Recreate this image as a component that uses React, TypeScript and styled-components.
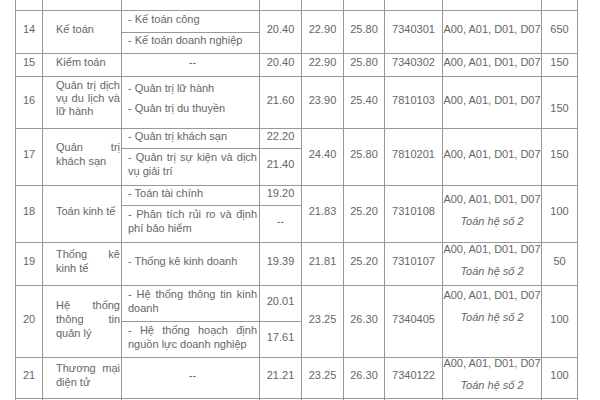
import React from 'react';
import styled, { createGlobalStyle } from 'styled-components';

const Global = createGlobalStyle`
  html, body { margin: 0; padding: 0; background: #fff; }
  body { font-family: "Liberation Sans", Arial, sans-serif; }
`;

const Page = styled.div`
  width: 600px;
  height: 400px;
  overflow: hidden;
  padding-left: 15px;
  box-sizing: border-box;
  background: #fff;
`;

const Table = styled.table`
  border-collapse: collapse;
  table-layout: fixed;
  width: 563px;
  font-size: 11px;
  color: #666;
  border-left: 1px solid #666;
  border-right: 1px solid #666;
`;

const Tr = styled.tr<{ $h: number }>`
  height: ${(p) => p.$h}px;
`;

const Td = styled.td<{ $noTop?: boolean; $pt?: number }>`
  border: 1px solid #999;
  border-top: ${(p) => (p.$noTop ? 'none' : '1px solid #999')};
  padding: ${(p) => p.$pt ?? 0}px 0 5px 0;
  vertical-align: middle;
  text-align: center;
  line-height: 14px;
  white-space: normal;
`;

const Blank = styled(Td)`
  padding: 0;
`;

const Name = styled(Td)<{ $tight?: boolean }>`
  text-align: justify;
  line-height: ${(p) => (p.$tight ? 13 : 14)}px;
  padding: 0 1px ${(p) => (p.$tight ? 8 : 5)}px 13px;
`;

const Sub = styled(Td)<{ $center?: boolean }>`
  text-align: ${(p) => (p.$center ? 'center' : 'justify')};
  padding: 0 2px 5px 6px;
`;

const SubLines = styled.div`
  line-height: 20px;
  margin-top: -3px;
`;

const Combo = styled(Td)`
  text-align: center;
  white-space: nowrap;
`;

const ComboStack = styled(Combo)`
  padding: 0;
`;

const ComboLines = styled.div<{ $extra?: boolean }>`
  line-height: 22px;
  margin-top: -8px;
  margin-bottom: ${(p) => (p.$extra ? 22 : 0)}px;
`;

const Note = styled.div`
  font-style: italic;
`;

const widths = [27, 79, 138, 42, 42, 41, 58, 99, 36];

const COMBO = 'A00, A01, D01, D07';

const Combo2: React.FC<{ extra?: boolean; rowSpan?: number }> = ({ extra, rowSpan }) => (
  <ComboStack rowSpan={rowSpan}>
    <ComboLines $extra={extra}>
      <div>{COMBO}</div>
      <Note>Toán hệ số 2</Note>
    </ComboLines>
  </ComboStack>
);

const Empty: React.FC<{ h: number; noTop?: boolean }> = ({ h, noTop }) => (
  <Tr $h={h}>
    {widths.map((_, i) => (
      <Blank key={i} $noTop={noTop} />
    ))}
  </Tr>
);

export default function App() {
  return (
    <>
      <Global />
      <Page>
        <Table>
          <colgroup>
            {widths.map((w, i) => (
              <col key={i} style={{ width: w }} />
            ))}
          </colgroup>
          <tbody>
            <Empty h={10} noTop />

            <Tr $h={22}>
              <Td rowSpan={2}>14</Td>
              <Name rowSpan={2}>Kế toán</Name>
              <Sub>- Kế toán công</Sub>
              <Td rowSpan={2}>20.40</Td>
              <Td rowSpan={2}>22.90</Td>
              <Td rowSpan={2}>25.80</Td>
              <Td rowSpan={2}>7340301</Td>
              <Combo rowSpan={2}>{COMBO}</Combo>
              <Td rowSpan={2}>650</Td>
            </Tr>
            <Tr $h={21}>
              <Sub>- Kế toán doanh nghiệp</Sub>
            </Tr>

            <Tr $h={23}>
              <Td>15</Td>
              <Name>Kiểm toán</Name>
              <Sub $center>--</Sub>
              <Td>20.40</Td>
              <Td>22.90</Td>
              <Td>25.80</Td>
              <Td>7340302</Td>
              <Combo>{COMBO}</Combo>
              <Td>150</Td>
            </Tr>

            <Tr $h={52}>
              <Td>16</Td>
              <Name $tight>Quản trị dịch vụ du lịch và lữ hành</Name>
              <Sub>
                <SubLines>
                  <div>- Quản trị lữ hành</div>
                  <div>- Quản trị du thuyền</div>
                </SubLines>
              </Sub>
              <Td>21.60</Td>
              <Td>23.90</Td>
              <Td>25.40</Td>
              <Td>7810103</Td>
              <Combo>{COMBO}</Combo>
              <Td $pt={17}>150</Td>
            </Tr>

            <Tr $h={20}>
              <Td rowSpan={2}>17</Td>
              <Name rowSpan={2}>Quản trị khách sạn</Name>
              <Sub>- Quản trị khách sạn</Sub>
              <Td>22.20</Td>
              <Td rowSpan={2}>24.40</Td>
              <Td rowSpan={2}>25.80</Td>
              <Td rowSpan={2}>7810201</Td>
              <Combo rowSpan={2}>{COMBO}</Combo>
              <Td rowSpan={2}>150</Td>
            </Tr>
            <Tr $h={37}>
              <Sub>- Quản trị sự kiện và dịch vụ giải trí</Sub>
              <Td>21.40</Td>
            </Tr>

            <Tr $h={20}>
              <Td rowSpan={2}>18</Td>
              <Name rowSpan={2}>Toán kinh tế</Name>
              <Sub>- Toán tài chính</Sub>
              <Td>19.20</Td>
              <Td rowSpan={2}>21.83</Td>
              <Td rowSpan={2}>25.20</Td>
              <Td rowSpan={2}>7310108</Td>
              <Combo2 rowSpan={2} />
              <Td rowSpan={2}>100</Td>
            </Tr>
            <Tr $h={37}>
              <Sub>- Phân tích rủi ro và định phí bảo hiểm</Sub>
              <Td>--</Td>
            </Tr>

            <Tr $h={43}>
              <Td>19</Td>
              <Name>Thống kê kinh tế</Name>
              <Sub>- Thống kê kinh doanh</Sub>
              <Td>19.39</Td>
              <Td>21.81</Td>
              <Td>25.20</Td>
              <Td>7310107</Td>
              <Combo2 />
              <Td>50</Td>
            </Tr>

            <Tr $h={36}>
              <Td rowSpan={2}>20</Td>
              <Name rowSpan={2}>Hệ thống thông tin quản lý</Name>
              <Sub>- Hệ thống thông tin kinh doanh</Sub>
              <Td>20.01</Td>
              <Td rowSpan={2}>23.25</Td>
              <Td rowSpan={2}>26.30</Td>
              <Td rowSpan={2}>7340405</Td>
              <Combo2 rowSpan={2} extra />
              <Td rowSpan={2}>100</Td>
            </Tr>
            <Tr $h={36}>
              <Sub>- Hệ thống hoạch định nguồn lực doanh nghiệp</Sub>
              <Td>17.61</Td>
            </Tr>

            <Tr $h={41}>
              <Td>21</Td>
              <Name>Thương mại điện tử</Name>
              <Sub $center>--</Sub>
              <Td>21.21</Td>
              <Td>23.25</Td>
              <Td>26.30</Td>
              <Td>7340122</Td>
              <Combo2 />
              <Td>100</Td>
            </Tr>

            <Empty h={30} />
          </tbody>
        </Table>
      </Page>
    </>
  );
}
